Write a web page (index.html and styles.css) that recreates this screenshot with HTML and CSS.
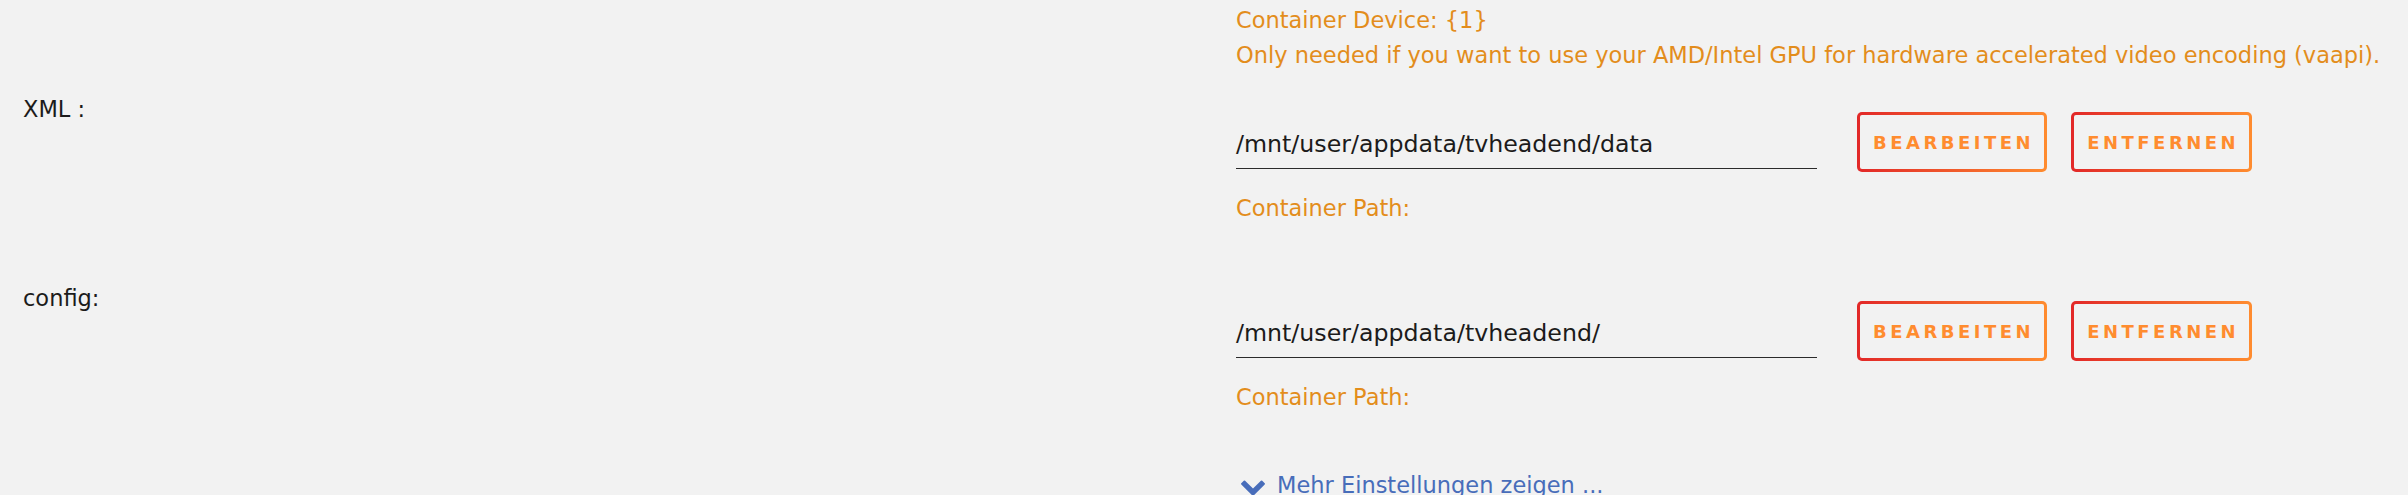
FILE: index.html
```html
<!DOCTYPE html>
<html lang="de">
<head>
<meta charset="utf-8">
<title>Docker Template</title>
<link rel="stylesheet" href="styles.css">
</head>
<body>
<div class="form">
  <div class="row row-top">
    <div class="label"></div>
    <div class="field">
      <div class="desc">Container Device: {1}<br>Only needed if you want to use your AMD/Intel GPU for hardware accelerated video encoding (vaapi).</div>
    </div>
  </div>

  <div class="row row-path">
    <div class="label">XML :</div>
    <div class="field">
      <div class="controls">
        <div class="input">/mnt/user/appdata/tvheadend/data</div>
        <button class="btn">Bearbeiten</button>
        <button class="btn">Entfernen</button>
      </div>
      <div class="desc desc-path">Container Path:</div>
    </div>
  </div>

  <div class="row row-path row-next">
    <div class="label">config:</div>
    <div class="field">
      <div class="controls">
        <div class="input">/mnt/user/appdata/tvheadend/</div>
        <button class="btn">Bearbeiten</button>
        <button class="btn">Entfernen</button>
      </div>
      <div class="desc desc-path">Container Path:</div>
    </div>
  </div>

  <div class="row row-more">
    <div class="label"></div>
    <div class="field">
      <a class="more" href="#"><svg class="chev" viewBox="90 515 1612 1053" width="24" height="16" aria-hidden="true"><path d="M1683 808l-742 741q-19 19-45 19t-45-19l-742-741q-19-19-19-45.5t19-45.5l166-165q19-19 45-19t45 19l531 531 531-531q19-19 45-19t45 19l166 165q19 19 19 45.5t-19 45.5z"/></svg><span>Mehr Einstellungen zeigen ...</span></a>
    </div>
  </div>
</div>
</body>
</html>
```

FILE: styles.css
```css
html, body {
  margin: 0;
  padding: 0;
  background: #f2f2f2;
}

body {
  font-family: "DejaVu Sans", "Noto Sans", sans-serif;
  font-size: 22.5px;
  line-height: 35px;
  color: #1c1b1b;
  overflow: hidden;
}

.form {
  padding: 3px 0 0 23px;
}

.row {
  display: grid;
  grid-template-columns: 1213px 1fr;
}

.row-path {
  margin-top: 19px;
}

.row-next {
  margin-top: 55px;
}

.row-more {
  margin-top: 53px;
}

.row-path .field {
  padding-top: 20px;
}

.desc {
  color: #e38d1c;
}

.desc-path {
  margin-top: 19px;
}

.controls {
  display: flex;
  align-items: flex-end;
}

.input {
  width: 581px;
  font-size: 23.7px;
  padding-bottom: 6px;
  margin-bottom: 3px;
  border-bottom: 1px solid #2b2b2b;
  color: #1c1b1b;
  white-space: nowrap;
}

.btn {
  height: 60px;
  box-sizing: border-box;
  padding: 0 10px 0 13px;
  margin-left: 24px;
  border: 3px solid transparent;
  border-radius: 5px;
  background:
    linear-gradient(#f2f2f2, #f2f2f2) padding-box,
    linear-gradient(90deg, #e22828 0%, #ff8c2f 100%) border-box;
  color: #ff8c2f;
  font-family: "DejaVu Sans", "Noto Sans", sans-serif;
  font-size: 18px;
  font-weight: bold;
  letter-spacing: 3.5px;
  text-transform: uppercase;
  cursor: pointer;
}

.input + .btn {
  margin-left: 40px;
}

.more {
  display: inline-flex;
  align-items: center;
  padding-left: 5px;
  color: #486dba;
  text-decoration: none;
}

.chev {
  fill: #486dba;
  margin-right: 12px;
  margin-top: 4px;
}
```
